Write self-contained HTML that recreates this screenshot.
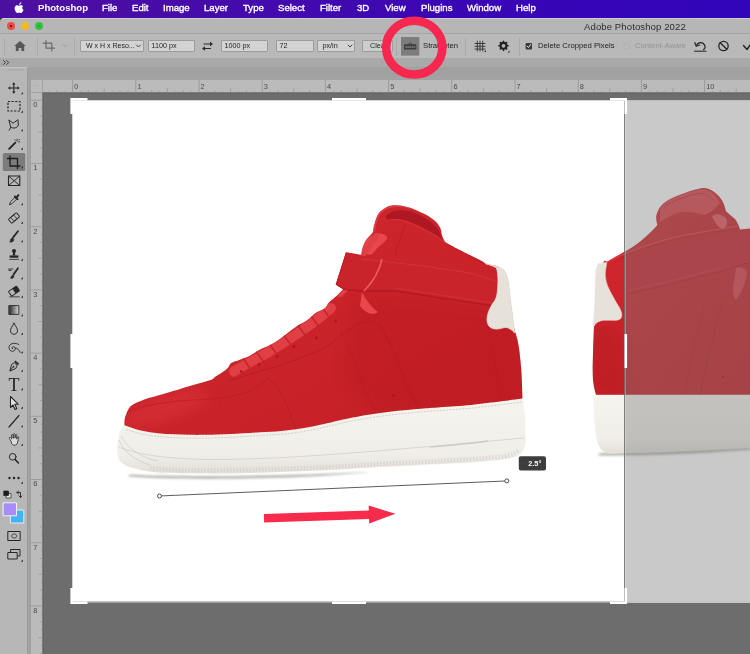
<!DOCTYPE html>
<html lang="en">
<head>
<meta charset="utf-8">
<title>Adobe Photoshop 2022</title>
<style>
html,body{margin:0;padding:0;}
body{width:750px;height:654px;position:relative;overflow:hidden;background:#737373;font-family:"Liberation Sans",sans-serif;}
.abs{position:absolute;}
#menubar span,#titlebar .t,.fld,.olbl,svg{will-change:transform;}
#menubar{left:0;top:0;width:750px;height:17.500px;background:linear-gradient(90deg,#4e10a0 0%,#430aad 35%,#3906b5 65%,#3205bb 100%);color:#fff;font-size:9.6px;-webkit-text-stroke:0.35px #fff;}
#menubar span{position:absolute;top:1.200px;white-space:nowrap;line-height:13px;}
#titlebar{left:0;top:17.500px;width:750px;height:16px;background:#b6b6b6;border-top:1.300px solid #cdcdcd;box-sizing:border-box;}
#titlebar .t{position:absolute;left:584px;top:2.500px;font-size:9.550px;line-height:12px;color:#2e2e2e;white-space:nowrap;letter-spacing:0.1px;}
.dot{position:absolute;top:3.400px;width:7.800px;height:7.800px;border-radius:50%;}
#optbar{left:0;top:33px;width:750px;height:25px;background:#b9b9b9;border-top:1px solid #a4a4a4;box-sizing:border-box;}
.fld{position:absolute;top:6.400px;height:11.500px;background:#d3d3d3;border:0.700px solid #9c9c9c;box-sizing:border-box;font-size:7.200px;color:#1e1e1e;line-height:10px;padding-left:2.500px;white-space:nowrap;border-radius:1px;}
.olbl{position:absolute;font-size:7.700px;color:#222;white-space:nowrap;top:7px;line-height:10px;}
.sep{position:absolute;top:4px;width:1px;height:18px;background:#a9a9a9;}
#strip{left:0;top:58px;width:750px;height:22px;background:#a1a1a1;}
#gap{left:27px;top:79px;width:4px;height:575px;background:#a1a1a1;}
#strip2{left:0;top:57.600px;width:750px;height:9px;background:#a9a9a9;}
#toolbar{left:0;top:66.800px;width:27.500px;height:588px;background:#b7b7b7;border-right:0.700px solid #9a9a9a;border-top:0.700px solid #c4c4c4;box-sizing:border-box;}
#hruler{left:42px;top:80px;width:708px;height:13px;background:#b6b6b6;border-bottom:1px solid #6a6a6a;}
#vruler{left:30px;top:80px;width:12px;height:574px;background:#b6b6b6;border-right:1px solid #6a6a6a;box-sizing:border-box;}
.rn{position:absolute;font-size:7.5px;color:#444;line-height:8px;}
#canvas{left:42px;top:94px;width:708px;height:560px;background:#737373;}
</style>
</head>
<body>
<!--CANVAS-START-->
<svg class="abs" style="left:0;top:0" width="750" height="654" viewBox="0 0 750 654">
<defs>
<clipPath id="docclip"><rect x="72.400" y="100.400" width="677.600" height="500.900"/></clipPath>
<linearGradient id="soleg" x1="0" y1="0" x2="0" y2="1"><stop offset="0" stop-color="#f6f4ef"/><stop offset="0.75" stop-color="#f0eee8"/><stop offset="1" stop-color="#e2dfd8"/></linearGradient>
<linearGradient id="redg" x1="0" y1="0" x2="1" y2="1"><stop offset="0" stop-color="#d3282f"/><stop offset="1" stop-color="#c31e26"/></linearGradient>
<filter id="blur3" x="-20%" y="-300%" width="140%" height="700%"><feGaussianBlur stdDeviation="2"/></filter>
<filter id="blur6" x="-30%" y="-30%" width="160%" height="160%"><feGaussianBlur stdDeviation="7"/></filter>
<filter id="blur1" x="-20%" y="-20%" width="140%" height="140%"><feGaussianBlur stdDeviation="1.2"/></filter>
</defs>
<rect x="42" y="93" width="708" height="561" fill="#6d6d6d"/>
<rect x="72.400" y="100.400" width="677.600" height="502.500" fill="#a8a8a8"/><rect x="72.400" y="100.400" width="677.600" height="500.900" fill="#ffffff"/>
<g clip-path="url(#docclip)">
<!-- LEFT SHOE -->
<g id="shoeL">
<path d="M128 476.500 C160 479.500 230 479.500 290 477.500 C320 476.300 345 474.500 370 472 C345 473 320 474 290 474.800 C230 476.300 170 476.500 130 474.500 Z" fill="#66665f" opacity="0.45" filter="url(#blur1)"/>
<path id="soleL" d="M122.8 426 C121.5 428.6 119.9 430.4 119 433.9 C118.1 437.3 117.5 443 117.3 446.7 C117.1 450.4 117.3 453.6 118 456.3 C118.7 459 119.5 460.8 121.7 462.7 C123.9 464.6 127 466.1 131.3 467.5 C135.6 468.9 142 470.3 147.3 471.2 C152.6 472.1 156.2 472.4 163.3 472.8 C170.4 473.2 180.1 473.2 190 473.3 C199.9 473.4 207.7 473.8 222.7 473.6 C237.7 473.4 262.1 472.6 280 472 C297.9 471.4 313.3 470.8 330 470 C346.7 469.2 365 467.8 380 467 C395 466.2 410 465.5 420 465 C430 464.5 431.6 464.4 440 464 C448.4 463.6 461.7 463.1 470.6 462.5 C479.5 461.9 486.9 461.3 493.5 460.6 C500.1 459.9 505.5 459.4 510 458.3 C514.5 457.2 518 456.3 520.5 454 C523 451.7 524.5 448.3 525.3 444.5 C526.1 440.7 525.4 436 525.3 431.2 C525.2 426.4 525.3 421.3 524.9 415.9 C524.5 410.5 523.5 404.4 522.8 398.6 C458.5 404.1 394.3 409.5 330 415 C260.9 418.7 191.9 422.3 122.8 426 Z" fill="url(#soleg)"/>
<path id="upperL" d="M124.4 425.2 C124.5 423.5 124.3 421.7 124.6 420 C124.9 418.3 125 417.1 126 414.8 C127 412.5 128.1 408.4 130.8 406 C133.5 403.6 137.5 402.1 142 400.4 C146.5 398.7 152.7 397.2 158 395.6 C163.3 394 168.7 392.4 174 390.8 C179.3 389.2 185.4 387.2 190 385.9 C194.6 384.5 197.6 383.8 201.3 382.7 C205 381.6 209.7 380.5 212 379.5 C214.3 378.5 213.4 378.1 215.2 376.8 C217 375.6 220.6 373.5 222.7 372 C224.8 370.5 226.6 369.2 228 367.7 C229.4 366.2 229.4 364.2 231.2 363 C233 361.8 235.7 361.5 238.7 360.3 C241.7 359.1 245.8 357.8 249.3 356 C252.9 354.2 256.6 351.4 260 349.6 C263.4 347.8 266.8 346.7 270 345 C273.2 343.3 276.1 341.5 279.2 339.4 C282.2 337.3 285.2 334.9 288.3 332.6 C291.4 330.3 294.4 327.7 297.5 325.7 C300.6 323.7 303.6 322.8 306.7 320.6 C309.8 318.5 312.8 314.9 315.9 312.8 C318.9 310.8 322.8 310.1 325 308.3 C327.2 306.5 327.3 304.1 329.3 302 C331.3 299.9 334.5 297.8 336.8 295.7 C339.1 293.6 341.1 291.4 343.2 289.3 C340.7 287.7 338.2 286 335.7 284.4 C339.1 273.7 342.5 263 345.9 252.3 C351.1 253.2 356.2 254.1 361.4 255 C361.8 252.7 361.7 250.5 362.5 248 C363.3 245.5 364.4 242.5 366 240 C367.6 237.5 371.1 235 372.3 233 C373.6 231 373.1 229.8 373.5 228 C373.9 226.2 374.3 224.2 375 222 C375.7 219.8 376.7 216.8 377.7 215 C378.7 213.2 379.2 212.4 381 211 C382.8 209.6 386 207.3 388.3 206.3 C390.6 205.3 392.8 205.3 395 205.2 C397.2 205.1 399.5 205.3 401.7 205.7 C403.9 206 405.8 206.6 408 207.3 C410.2 208 412.5 208.7 415 209.7 C417.5 210.7 420.6 212.1 423 213.3 C425.4 214.5 427.7 215.7 429.7 217 C431.7 218.3 433.4 219.6 435 221 C436.6 222.4 438 224.2 439 225.7 C440 227.2 440.5 228.4 441 230 C441.5 231.6 441.4 233.4 441.9 235 C442.4 236.6 443 238.4 443.9 239.8 C444.8 241.2 444.2 241.5 447.5 243.5 C450.8 245.5 458.1 249.1 463.6 251.9 C469.1 254.7 476.9 258.4 480.5 260.3 C484.1 262.2 483.8 262.5 485.5 263.6 C490.5 265 497.1 265.8 500.6 267.8 C504.1 269.8 505.1 272.2 506.5 275.4 C507.9 278.6 508.4 283 509 287.2 C509.6 291.4 509.8 296.1 510.4 300.6 C511 305.1 511.8 309.5 512.4 314 C513 318.5 513.1 323.2 514 327.5 C514.9 331.8 516.6 335.9 517.5 340 C518.4 344.1 518.9 347 519.5 352 C520.1 357 520.9 364.5 521.3 370 C521.7 375.5 521.8 380.2 522 385 C522.2 389.8 522.3 394.1 522.4 398.6 C515.3 399.5 509.8 400.2 501.2 401.3 C492.6 402.4 480.8 403.9 470.6 404.9 C460.4 405.9 448.4 406.6 440 407.2 C431.6 407.8 427.8 408 420 408.7 C412.2 409.4 402.2 410.2 393.3 411.3 C384.4 412.4 375.6 413.5 366.7 415 C357.8 416.5 347.1 418.7 340 420.2 C332.9 421.7 330.2 422.6 324 424 C317.8 425.4 309.8 427.2 302.7 428.3 C295.6 429.4 288.4 430.2 281.3 430.9 C274.2 431.5 268.6 431.7 260 432.2 C251.4 432.7 239 433.6 230 434 C221 434.4 212.7 434.7 206 434.8 C199.3 434.9 195.3 434.9 190 434.8 C184.7 434.7 179.3 434.6 174 434.3 C168.7 434 163.3 433.8 158 433.2 C152.7 432.6 147.6 432.1 142 430.8 C136.4 429.5 130.3 427.1 124.4 425.2 Z" fill="url(#redg)"/>
<!-- left shoe details -->
<clipPath id="clipUL"><use href="#upperL"/></clipPath>
<clipPath id="clipSL"><use href="#soleL"/></clipPath>
<g clip-path="url(#clipUL)">
<!-- soft shading -->
<path d="M350 300 L400 296 L490 310 L524 330 L524 402 L380 416 L345 380 Z" fill="#b0141d" opacity="0.26" filter="url(#blur6)"/>
<path d="M118 430 C122 410 150 398 190 388 L215 398 L170 420 Z" fill="#e8434a" opacity="0.32" filter="url(#blur6)"/>
<!-- collar inner lining -->
<path d="M386 216 C392 210 400 209.500 408.300 211 C414 212.500 420 215 424.300 217.700 C429 220.500 433 223 435 225.700 C438 229 440 232 441 236 L443.500 240.500 C438 235.500 432 232 427 229.700 C421 226.500 416 224 411 222.300 C407 220.500 403 219.300 399 219 C394 219 390 219.500 387 220.300 Z" fill="#ae1822"/>
<!-- rim highlight -->
<path d="M374 232 C375 224 377 217 381 212 C385 208 390 206.500 396 206 C404 205.500 412 207.500 420 210.500 C428 214 435 218.500 439 224" stroke="#e0424a" stroke-width="2" fill="none" opacity="0.75"/>
<!-- tongue seam -->
<path d="M406 225 C402 233 398 243 395 255" stroke="#b01822" stroke-width="0.900" fill="none" opacity="0.6"/>
<path d="M386 221 C392 218 402 219.500 412 224 C424 229 436 236 446 243" stroke="#dc3d45" stroke-width="1" fill="none" opacity="0.6"/>
<!-- lace loops at top -->
<path d="M363 252 C362 244 367 238 374 234.500 C380 232.500 386 234 387.500 238 C385 243 378 246 374 252 C372 255 368 256 363 252 Z" fill="#e8474e"/>
<!-- laces band -->
<path d="M234 371.500 C244 365 256 359 268 352.500 C280 345.500 292 337.500 302 330.500 C312 323.500 322 316.500 331 308" stroke="#e03f46" stroke-width="10" fill="none" stroke-linecap="round"/>
<path d="M340 294 C348 288 356 274 363 254 L376 236" stroke="#e03f46" stroke-width="6" fill="none" stroke-linecap="round"/>
<g stroke="#c5232c" stroke-width="1.700" fill="none" opacity="0.9" stroke-linecap="round">
<path d="M243 358 l6 9 M256.500 352 l6.500 9 M270 345 l7 9.500 M284 335.500 l7 9.500 M298 325.500 l7 9.500 M311 316 l7 9.500 M323 308.500 l6 8.500"/>
</g>
<g fill="#a81620"><circle cx="241.200" cy="371.500" r="1.300"/><circle cx="259" cy="364.500" r="1.300"/><circle cx="277.200" cy="356.500" r="1.400"/><circle cx="294" cy="346.500" r="1.400"/><circle cx="316.400" cy="338" r="1.400"/><circle cx="335.600" cy="321" r="1.400"/></g>
<!-- eyestay seam -->
<path d="M228 381 C245 376 262 370 282.800 364.800 C290 362 297 359 305 356 C312 353.500 320 350.500 326 347 C332 343 338 337 344 333 C350 329 354 325 360 323 C367 320 374 321 380 326 C390 340 400 368 410 392 C414 400 418 408 422 413" stroke="#b51b25" stroke-width="1.100" fill="none" opacity="0.75"/>
<path d="M340 331 C346 340 352 356 358 372 C362 384 368 398 376 412" stroke="#b51b25" stroke-width="0.900" fill="none" opacity="0.6"/>
<!-- mudguard / toe seam -->
<path d="M124 414 C140 405 165 402 192 400 C212 399 232 398 247 392 C256 388 262 384 268 378" stroke="#b51b25" stroke-width="1" fill="none" opacity="0.6"/>
<path d="M268 378 C282 390 290 410 296 431" stroke="#b51b25" stroke-width="1" fill="none" opacity="0.55"/>
<!-- strap -->
<path d="M345.900 252.300 L361.400 255.500 L384 258.800 L423 263.400 L470 270.300 L497 279 L497 306 L470 302.400 L395.700 291 L361 291 L343.200 289.300 L335.700 284.400 Z" fill="#c9232c"/>
<path d="M335.700 284.400 L343.200 289.300 L361 291 L395.700 291 L470 302.400 L495 306" stroke="#a9151f" stroke-width="1.400" fill="none" opacity="0.7"/>
<path d="M362 259 L384 261.500 L423 266 L470 273 L497 281.500" stroke="#e24a52" stroke-width="0.800" fill="none" opacity="0.8" stroke-dasharray="1.400 0.800"/>
<path d="M395 288 L470 299.500 L495 303.500" stroke="#e24a52" stroke-width="0.800" fill="none" opacity="0.7" stroke-dasharray="1.400 0.800"/>
<path d="M382 259 C380 268 374 281 364 291" stroke="#ef5a63" stroke-width="1.600" fill="none"/>
<path d="M346.200 253 L336.200 284.400" stroke="#b31a25" stroke-width="1" fill="none" opacity="0.7"/>
<!-- lace loop tail under strap -->
<path d="M362 292 C366 300 372 308 378 312 C374 316 366 314 360 306 Z" fill="#e8474e"/>
<!-- collar stitching -->
<path d="M446 243 C458 250 470 256.500 484 264" stroke="#b51b25" stroke-width="0.900" fill="none" opacity="0.6"/>
<!-- heel seam -->
<path d="M487 322 C492 345 497 372 500 403" stroke="#b51b25" stroke-width="0.900" fill="none" opacity="0.45"/>
<circle cx="393.500" cy="395.500" r="1" fill="#9a1019"/>
</g>
<g clip-path="url(#clipSL)">
<!-- sole top highlight and stitch -->
<path d="M126 429.5 C128.7 430.3 136.7 432.9 142 434.1 C147.3 435.3 152.7 435.9 158 436.5 C163.3 437.1 168.7 437.3 174 437.6 C179.3 437.9 184.7 438 190 438.1 C195.3 438.2 199.3 438.2 206 438.1 C212.7 438 221 437.7 230 437.3 C239 436.9 251.4 436 260 435.5 C268.6 435 274.2 434.8 281.3 434.2 C288.4 433.6 295.6 432.8 302.7 431.6 C309.8 430.5 317.8 428.7 324 427.3 C330.2 425.9 332.9 425 340 423.5 C347.1 422 357.8 419.8 366.7 418.3 C375.6 416.8 384.4 415.7 393.3 414.6 C402.2 413.6 412.2 412.7 420 412 C427.8 411.3 431.6 411.1 440 410.5 C448.4 409.9 460.4 409.2 470.6 408.2 C480.8 407.2 492.5 405.7 501.2 404.6 C509.9 403.5 519.4 402.3 523 401.8" stroke="#cbc7be" stroke-width="0.800" fill="none" stroke-dasharray="2 1.200"/>
<path d="M119 447 C140 456 176 459 207 459.500 C260 460 330 455 400 449 C450 445 500 440 524 438" stroke="#d9d6ce" stroke-width="1" fill="none"/>
<!-- teeth -->
<path d="M150 468.3 C156.7 468.6 168.3 470.2 190 470.3 C211.7 470.4 256.7 469.6 280 469 C303.3 468.4 313.3 467.8 330 467 C346.7 466.2 361.7 465 380 464 C398.3 463 421.2 462.1 440 461 C458.8 459.9 481.3 458.6 493 457.6 C504.7 456.6 505.7 456.2 510 455 C514.3 453.8 517.5 451.2 519 450.5" stroke="#cfcbc3" stroke-width="4.500" fill="none" stroke-dasharray="1.600 1.600" opacity="0.55"/>
<!-- toe wrap lines -->
<path d="M119 440 C124 452 134 460 150 465 M121 436 C128 449 140 457 158 461" stroke="#d2cec6" stroke-width="0.800" fill="none"/>
<path d="M430 447 C450 445.500 470 443.500 488 441" stroke="#cbc7be" stroke-width="1.600" fill="none" opacity="0.8"/>
</g>
<path id="tabL" d="M485.500 263.600 L500.600 267.800 C504 270 506 273 506.500 275.400 C508 279 509 283 509 287.200 C510 292 510.400 296 510.400 300.600 C511 305 512 310 512.400 314 C513 319 513.500 323 514 327.500 L514.500 333 C513 331 511.500 329.500 510 329 C508 327.500 506 327.300 504 327.600 C501 328.500 498 329.300 495.600 329 C492.500 328.600 490 327.500 488.900 325.900 C487.500 324 487 321.500 487 319 C487.300 315 488.300 312 489.700 309 C491 306 493 303 494.800 300.600 C496.300 298 497 295 497.300 292 C497.800 288 498 284 498 280.500 C498 276 497.500 271 496.400 267.800 C493 266 489 264.500 485.500 263.600 Z" fill="#e6e2da" stroke="#e6e2da" stroke-width="0.800"/>
</g>
<!-- RIGHT SHOE -->
<g id="shoeR">
<path d="M598 455.500 C640 456.500 700 453.500 750 450 L750 447.500 L600 453 Z" fill="#66665f" opacity="0.45" filter="url(#blur1)"/>
<path d="M593 394 L750 394.200 L750 447.400 C720 449.200 690 451 660 452.200 C648 452.800 636 453 625.400 452.900 C620 453.300 615 453.800 610.300 453.600 C606 452.800 602.500 451 600.600 448.800 C598.500 445.500 597.200 441.500 596.500 437.800 C595.500 432 594.800 426.500 594.400 421.300 C593.700 412 593.200 403 593 394 Z" fill="url(#soleg)"/>
<path d="M596 394.800 C594.500 390 593.500 385 593 380 C592.600 374 592.600 367 592.800 361 C593 350 593.400 339 593.900 328 C594.500 323 594.800 318 595 313.500 C595.300 305 595.800 296 596.500 287.800 C597.500 281 599 274 601 269.400 C602 266 603 263 604.600 260.600 L607 261.700 C612 258.500 618 255.500 623 252.600 C627 250.500 631 248 634.400 245.700 C638.500 243 642 240 645.900 236.500 C650 233 654 229 657.300 225 C656.500 222 656 219 656.200 215.900 C657 213 658 210.500 659.600 207.800 C662 204.500 665 202 668.800 199.800 C674 197 679 195 684.900 193 C690 191 695.500 189.500 700.900 188.300 C704 187.800 707 188.300 710 189.500 C715 192 719 195.500 721.600 199.800 C724 203.500 725 207 726 211.300 C729 214 732 216.500 735.300 219.300 C737.500 222.500 739 226 740 229.600 L750 228.500 L750 394.800 Z" fill="url(#redg)" id="upperR"/>
<clipPath id="clipUR"><use href="#upperR"/></clipPath>
<g clip-path="url(#clipUR)">
<path d="M585 330 L620 322 L630 400 L585 400 Z" fill="#a5121b" opacity="0.30" filter="url(#blur6)"/>

<!-- tongue face -->
<path d="M660 209 C664 203 670 199 678 196 C686 193 694 190.500 701 189.300 C705 189 708 190 711 192 C715 195 718 199 720 203 C716 208 710 213 704 215 C696 213 688 211 680 212 C673 214 666 218 660 222 Z" fill="#e0444b"/>
<path d="M664 207 C672 201 684 196.500 698 193.500 C704 193 709 195 713 200" stroke="#b01822" stroke-width="0.900" fill="none" opacity="0.6"/>
<!-- lace loop -->
<path d="M712 216 C716 213 722 214 726 218 C728 222 727 227 723 229 C719 228 715 224 712 216 Z" fill="#e8545b"/>
<!-- collar lines -->
<path d="M607 262 C625 253 650 243 676 237 C700 232 726 228 750 224" stroke="#e0525a" stroke-width="0.900" fill="none" opacity="0.8"/>
<path d="M620 258 C640 249 662 243 684 238 C704 234 728 230 750 227" stroke="#b01822" stroke-width="0.800" fill="none" opacity="0.5"/>
<!-- strap -->
<path d="M624 259 C650 247 690 238.500 720 235 L750 231 L750 262 L719 272 C700 276 690 279 680 282 C660 287 645 290 627.500 294 Z" fill="#cc252e" opacity="0.9"/>
<path d="M627.500 294 C645 290 660 287 680 282 C690 279 700 276 719 272 L750 262" stroke="#a8141e" stroke-width="1.200" fill="none" opacity="0.6"/>
<path d="M628 290.500 C646 286.500 661 283.500 680 278.500 C692 275.500 704 272 719 268.500" stroke="#e4555c" stroke-width="0.700" fill="none" opacity="0.7" stroke-dasharray="1.400 0.800"/>
<!-- lace tail -->
<path d="M736 268 C740 266 745 268 747 272 C746 282 742 292 736 300 C733 297 732 290 734 282 Z" fill="#dc4149"/>
<!-- side seam -->
<path d="M722 300 C716 330 706 360 700 398" stroke="#a8141e" stroke-width="0.900" fill="none" opacity="0.45"/>
<path d="M706 300 C698 330 690 362 684 398" stroke="#a8141e" stroke-width="0.800" fill="none" opacity="0.35"/>
<circle cx="723" cy="377" r="0.900" fill="#8a0c15"/>
</g>

<path d="M598.300 263.700 L606.800 262.500 C606 267 605.200 271 605.200 275 C605.500 279 606.300 282.500 607.500 285.900 C609 289.500 611 293 612.900 296.600 C614.500 299.800 616.500 302.800 618.200 305.700 C619.800 308 621 310.500 621.600 313.400 C622 315.500 621.600 317.500 620.500 318.700 C619 320 616.500 320.300 614.400 320.300 C610.500 320.200 606.500 320 603 320.300 C600 320.800 597.800 322 596 323.300 C595 324.300 594.400 325.300 594 326.400 L593.200 326.400 C593.500 323 593.800 319 594 316.500 C594.400 311 594.800 306 595 301 C595 296 595.100 291 595.300 285.900 C595.400 280.500 595.600 275.500 596 270.600 C596.500 268 597.300 265.600 598.300 263.700 Z" fill="#e6e2da" stroke="#e6e2da" stroke-width="0.600"/>
</g>
</g>
<!-- crop shield -->
<rect x="625.100" y="100.400" width="124.900" height="500.900" fill="#7a7a7a" opacity="0.405"/><rect x="625.100" y="601.300" width="124.900" height="1.600" fill="#c8c8c8"/>
<rect x="624.100" y="100.400" width="1" height="502.500" fill="#707070"/><rect x="625.100" y="100.400" width="0.800" height="502.500" fill="#ffffff" opacity="0.35"/>
</svg>
<!--CANVAS-END-->
<div id="menubar" class="abs">
<svg class="abs" style="left:13.700px;top:2px" width="10.600" height="11.400" viewBox="0 0 12 13"><path d="M8.300 0.200 C8.400 1 8.100 1.700 7.600 2.300 C7.100 2.900 6.400 3.300 5.700 3.200 C5.600 2.500 5.900 1.800 6.400 1.300 C6.900 0.700 7.700 0.300 8.300 0.200 Z M10.500 4.600 C9.800 5 9.300 5.700 9.300 6.600 C9.300 7.700 10 8.500 10.800 8.800 C10.500 9.700 10.100 10.500 9.500 11.300 C9 12 8.500 12.600 7.700 12.600 C6.900 12.600 6.700 12.200 5.800 12.200 C4.900 12.200 4.600 12.600 3.900 12.600 C3.100 12.600 2.500 11.900 2 11.200 C0.900 9.700 0.100 7 1.200 5.200 C1.700 4.300 2.700 3.700 3.700 3.700 C4.500 3.700 5.200 4.200 5.700 4.200 C6.200 4.200 7.100 3.600 8.100 3.700 C8.500 3.700 9.700 3.900 10.500 4.600 Z" fill="#fff"/></svg>
<span style="left:38px;font-weight:bold;-webkit-text-stroke:0">Photoshop</span>
<span style="left:102px">File</span>
<span style="left:132px">Edit</span>
<span style="left:163px">Image</span>
<span style="left:204px">Layer</span>
<span style="left:243px">Type</span>
<span style="left:278px">Select</span>
<span style="left:320px">Filter</span>
<span style="left:357px">3D</span>
<span style="left:385px">View</span>
<span style="left:421px">Plugins</span>
<span style="left:467px">Window</span>
<span style="left:516px">Help</span>
</div>
<div class="abs" style="left:0;top:17.500px;width:3px;height:3px;background:#2a2a2a"></div>
<div id="titlebar" class="abs" style="border-top-left-radius:4px">
<div class="dot" style="left:6.800px;background:radial-gradient(circle,#8a1410 0 22%,#ee4b46 28%)"></div>
<div class="dot" style="left:21px;background:#f5b82c"></div>
<div class="dot" style="left:35.400px;background:radial-gradient(circle,#2ba83a 0 18%,#35c148 34%)"></div>
<div class="t">Adobe Photoshop 2022</div>
</div>
<div id="optbar" class="abs">
<div class="sep" style="left:4px;background:#a8a8a8"></div>
<div class="sep" style="left:37px"></div>
<div class="sep" style="left:74px"></div>
<div class="sep" style="left:396px"></div>
<div class="sep" style="left:465px"></div>
<div class="sep" style="left:519px"></div>
<svg class="abs" style="left:0;top:-1px" width="750" height="25" viewBox="0 33 750 25" fill="none" stroke-linecap="round" stroke-linejoin="round">
<!-- home -->
<path d="M20 41 L14.200 46 H15.800 V51 H18.600 V48 H21.400 V51 H24.200 V46 H25.800 Z" fill="#575757"/>
<!-- crop icon -->
<path d="M46 40.500 V48.200 H54.500 M43.300 43.200 H51.800 V51" stroke="#6a6a6a" stroke-width="1.200"/>
<path d="M63 44.600 L65 46.600 L67 44.600" stroke="#9a9a9a" stroke-width="0.900"/>
<!-- swap -->
<path d="M204 44 H211 M203.500 48.500 H210.500" stroke="#2a2a2a" stroke-width="1.100"/><path d="M213 44 l-3 -2.200 v4.400 z M202 48.500 l3 -2.200 v4.400 z" fill="#2a2a2a"/>
<!-- straighten -->
<rect x="401" y="37" width="18.300" height="18.600" fill="#7d7d7d"/>
<rect x="404" y="44.300" width="12.300" height="5.200" rx="0.600" fill="#3c3c3c"/><path d="M405.500 47 H415" stroke="#b8b8b8" stroke-width="0.800" stroke-dasharray="1.200 1"/><path d="M408.500 44 C409 42.600 411.500 42.600 412 44" stroke="#3c3c3c" stroke-width="0.800"/>
<!-- grid -->
<path d="M475 43.500 H485 M475 46.300 H485 M475 49.100 H485 M477.300 41.200 V51 M480 41.200 V51 M482.700 41.200 V51" stroke="#333" stroke-width="0.900"/><path d="M486 50 v2 h-2 z" fill="#333"/>
<!-- gear -->
<circle cx="503.500" cy="45.800" r="2.900" stroke="#222" stroke-width="2.100"/><path d="M503.500 41.200 V42.300 M503.500 49.300 V50.400 M498.900 45.800 H500 M507 45.800 H508.100 M500.300 42.600 L501 43.300 M506 48.300 L506.700 49 M506.700 42.600 L506 43.300 M501 48.300 L500.300 49" stroke="#222" stroke-width="1.500"/><path d="M509.500 50.500 v2 h-2 z" fill="#222"/>
<!-- checkbox -->
<rect x="525.600" y="43" width="6.400" height="6.400" rx="1" fill="#3a3a3a"/><path d="M527.200 46.200 L528.500 47.600 L530.600 44.600" stroke="#e6e6e6" stroke-width="1"/>
<rect x="624" y="43.300" width="5.600" height="5.600" rx="1" stroke="#b0b0b0" stroke-width="0.700"/>
<!-- undo -->
<path d="M696.500 45.200 C698 42 702.500 41.600 704.300 44.600 C705.500 46.600 705 48.600 703.600 49.600" stroke="#222" stroke-width="1.200"/><path d="M694.800 42.500 L696.200 46.300 L699.800 45" stroke="#222" stroke-width="1.100"/><path d="M694.500 51.200 H706" stroke="#222" stroke-width="1"/>
<!-- cancel -->
<circle cx="723.500" cy="46" r="4.700" stroke="#222" stroke-width="1.300"/><path d="M720.200 42.700 L726.800 49.300" stroke="#222" stroke-width="1.300"/>
<!-- commit -->
<path d="M743.500 45.500 L747 49.500 L752 42.500" stroke="#222" stroke-width="1.400"/>
</svg>
<div class="fld" style="left:79.500px;width:64px;padding-left:5px;font-size:7px">W x H x Reso...</div>
<div class="fld" style="left:147.500px;width:46.500px;">1100 px</div>
<div class="fld" style="left:221px;width:47px;">1000 px</div>
<div class="fld" style="left:275.500px;width:38px;">72</div>
<div class="fld" style="left:317px;width:37.500px;padding-left:4.500px">px/in</div>
<div class="fld" style="left:362px;width:31px;padding-left:7px;background:#cdcdcd">Clear</div>
<svg class="abs" style="left:0;top:-1px" width="750" height="25" viewBox="0 33 750 25" fill="none" stroke-linecap="round" stroke-linejoin="round"><path d="M136.500 45 L138.500 47 L140.500 45 M348 45 L350 47 L352 45" stroke="#333" stroke-width="0.900"/></svg>
<div class="olbl" style="left:422.500px">Straighten</div>
<div class="olbl" style="left:537.600px">Delete Cropped Pixels</div>
<div class="olbl" style="left:635px;color:#949494">Content-Aware</div>
</div>
<div id="strip" class="abs"></div>
<div id="gap" class="abs"></div>
<div id="strip2" class="abs"></div>
<div id="toolbar" class="abs"></div>
<!--TB-START-->
<svg class="abs" style="left:0;top:58px" width="30" height="596" viewBox="0 58 30 596" fill="none" stroke="#262626" stroke-width="1.1" stroke-linecap="round" stroke-linejoin="round">
<!-- collapse chevrons -->
<path d="M3.500 60.500 L5.500 62.500 L3.500 64.500 M6.700 60.500 L8.700 62.500 L6.700 64.500" stroke="#333" stroke-width="0.9"/>
<!-- grip -->
<path d="M8 70 H24" stroke="#a5a5a5" stroke-width="1.2"/>
<!-- crop highlight -->
<rect x="2.800" y="153" width="22.500" height="18" rx="1.500" fill="#7c7c7c" stroke="none"/>
<!-- corner triangles -->
<g fill="#333" stroke="none">
<path d="M23 92 v2.200 h-2.200 z"/><path d="M23 110.500 v2.200 h-2.200 z"/><path d="M23 129 v2.200 h-2.200 z"/><path d="M23 147.500 v2.200 h-2.200 z"/><path d="M23 166 v2.200 h-2.200 z"/>
<path d="M23 203 v2.200 h-2.200 z"/><path d="M23 221.500 v2.200 h-2.200 z"/><path d="M23 240 v2.200 h-2.200 z"/><path d="M23 258.500 v2.200 h-2.200 z"/><path d="M23 277 v2.200 h-2.200 z"/><path d="M23 295.500 v2.200 h-2.200 z"/><path d="M23 314 v2.200 h-2.200 z"/><path d="M23 332.500 v2.200 h-2.200 z"/><path d="M23 351 v2.200 h-2.200 z"/><path d="M23 369.500 v2.200 h-2.200 z"/><path d="M23 388 v2.200 h-2.200 z"/><path d="M23 406.500 v2.200 h-2.200 z"/><path d="M23 425 v2.200 h-2.200 z"/><path d="M23 443.500 v2.200 h-2.200 z"/><path d="M23 481.500 v2.200 h-2.200 z"/><path d="M23 559.500 v2.200 h-2.200 z"/>
</g>
<!-- move -->
<g transform="translate(13.800 88)"><path d="M0 -4.500 V4.500 M-4.500 0 H4.500" stroke-width="1.100"/><path d="M0 -5.800 l-1.700 2.200 h3.400 z M0 5.800 l-1.700 -2.200 h3.400 z M-5.800 0 l2.200 -1.700 v3.400 z M5.800 0 l-2.200 -1.700 v3.400 z" fill="#262626" stroke="none"/></g>
<!-- marquee -->
<rect x="8" y="101.500" width="12" height="9.500" stroke-dasharray="2.200 1.400" stroke-linecap="butt" stroke-width="1.200"/>
<!-- lasso -->
<g transform="translate(14 125) scale(0.880) translate(-14 -125)"><path d="M8.500 119.500 L13 123 L18.500 119 L19 125 C18 128.500 13 129.500 10.500 127.500 Z M10.500 127.500 L8.500 131" stroke-width="1.100"/></g>
<!-- magic wand -->
<g transform="translate(14 144) scale(0.880) translate(-14 -144)"><path d="M8.500 149.500 L15.500 142.500" stroke-width="2.200"/><path d="M17.500 138.500 v2 M19 141.500 h1.500 M16 140 l-1 -1 M19.500 139.500 l0.800 -0.800" stroke-width="0.900"/></g>
<!-- crop -->
<path d="M10 156 V166 H20 M7.500 158.500 H17.500 V168.500" stroke="#1b1b1b" stroke-width="1.300"/>
<!-- frame -->
<rect x="8.500" y="176" width="11.300" height="9.500" stroke-width="1.100"/><path d="M8.500 176 L19.800 185.500 M19.800 176 L8.500 185.500" stroke-width="0.900"/>
<!-- eyedropper -->
<g transform="translate(14 200) scale(0.880) translate(-14 -200)"><path d="M9 205 L10 202 L15 197 L17 199 L12 204 Z" stroke-width="1"/><path d="M15 196 L18 199 M16.500 197.500 L19 194.500" stroke-width="2.200"/></g>
<!-- healing -->
<g transform="translate(14 218) scale(0.880) translate(-14 -218)"><g transform="translate(14 218) rotate(-40)"><rect x="-6" y="-3" width="12" height="6" rx="1" stroke-width="1.100"/><rect x="-2" y="-3" width="4" height="6" stroke-width="0.800"/></g></g>
<!-- brush -->
<g transform="translate(14 236.5) scale(0.880) translate(-14 -236.5)"><path d="M18.500 230.500 L13 237.500" stroke-width="2"/><path d="M12.500 238 C11.500 238 10 239 10 241 C10 242 9.500 242.500 9 242.500 C11 243.500 13.500 242.500 13.800 240.500 Z" fill="#262626" stroke-width="0.600"/></g>
<!-- stamp -->
<g transform="translate(14 255) scale(0.880) translate(-14 -255)"><circle cx="14" cy="250.500" r="2.300" fill="#262626" stroke="none"/><path d="M13 252 h2 l0.500 3.500 h-3 z" fill="#262626" stroke="none"/><rect x="9" y="255.500" width="10" height="2.600" fill="#262626" stroke="none"/><path d="M9 260 H19" stroke-width="0.900"/></g>
<!-- history brush -->
<g transform="translate(14 273.5) scale(0.880) translate(-14 -273.5)"><path d="M18.500 267.500 L13.500 274.500" stroke-width="2"/><path d="M13 275 C11.500 275.500 11 277 10 279 C12 279.500 13.800 278.500 14 277 Z" fill="#262626" stroke-width="0.600"/><path d="M8.500 270 C9.500 268 11.500 267.500 13 268.500 M8.300 267.800 L8.500 270.200 L10.800 270" stroke-width="0.900"/></g>
<!-- eraser -->
<g transform="translate(14 292) scale(0.880) translate(-14 -292)"><g transform="translate(14 291) rotate(-35)"><rect x="-5.500" y="-3.200" width="11" height="6.400" rx="0.800" stroke-width="1.100"/><rect x="0" y="-3.200" width="5.500" height="6.400" fill="#262626" stroke="none"/></g><path d="M9 297.500 H20" stroke-width="0.900"/></g>
<!-- gradient -->
<linearGradient id="tg" x1="0" y1="0" x2="1" y2="0"><stop offset="0" stop-color="#2a2a2a"/><stop offset="1" stop-color="#d8d8d8"/></linearGradient>
<g transform="translate(14 310) scale(0.880) translate(-14 -310)"><rect x="8.500" y="305" width="11" height="10" fill="url(#tg)" stroke-width="1"/></g>
<!-- blur drop -->
<g transform="translate(14 329) scale(0.880) translate(-14 -329)"><path d="M14 322.500 C12 326 10 328.500 10 331 C10 333.300 11.800 335 14 335 C16.200 335 18 333.300 18 331 C18 328.500 16 326 14 322.500 Z" stroke-width="1.100"/></g>
<!-- dodge -->
<g transform="translate(14 348) scale(0.880) translate(-14 -348)"><path d="M19.500 344 C16 342 10 342 8.500 346 C7.500 349.500 10.500 352.500 13.500 351.500 C16 350.500 16 347 13.500 346.500 C11.500 346.300 11 348.500 12.500 349 M15.500 348 C18 348 19.500 350 21 353" stroke-width="1"/></g>
<!-- pen -->
<g transform="translate(14 366) scale(0.880) translate(-14 -366)"><g transform="translate(14 366) rotate(40)"><path d="M0 7 L-3.200 0.500 L-2.300 -3 H2.300 L3.200 0.500 Z M0 7 V1.500" stroke-width="1"/><circle cx="0" cy="0.800" r="0.900" fill="#262626" stroke="none"/><rect x="-2.800" y="-5.800" width="5.600" height="2" fill="#262626" stroke="none"/></g></g>
<!-- type -->
<text x="14" y="391" font-family="'Liberation Serif',serif" font-size="18" fill="#222" stroke="none" text-anchor="middle">T</text>
<!-- path select -->
<path d="M10.500 396.500 L10.500 407.500 L13 405 L15 409.500 L16.800 408.700 L14.800 404.300 L18.300 404.300 Z" stroke-width="1.100" fill="#e4e4e4"/>
<!-- line -->
<path d="M9 427 L19 415.500" stroke-width="1.200"/>
<!-- hand -->
<g transform="translate(14 440) scale(0.880) translate(-14 -440)"><path d="M10.500 441 C9 439 8 437.500 9 437 C10 436.500 11 438 11.500 439 L11.300 434.500 C11.300 433.500 12.700 433.500 12.800 434.500 L13.200 438 L13.400 433.500 C13.500 432.500 14.900 432.500 15 433.500 L15.100 438 L15.800 434.300 C16 433.400 17.300 433.600 17.200 434.600 L16.900 439 L17.900 436.600 C18.300 435.800 19.500 436.300 19.200 437.300 C18.500 440 18.300 442.500 17.500 444.500 C16.500 446.500 12.500 446.500 11.500 444.500 Z" stroke-width="0.900" fill="#dcdcdc"/></g>
<!-- zoom -->
<g transform="translate(14 459) scale(0.880) translate(-14 -459)"><circle cx="12.500" cy="456.500" r="3.800" stroke-width="1.100"/><path d="M15.300 459.500 L19 463.500" stroke-width="1.800"/></g>
<!-- dots -->
<g fill="#222" stroke="none"><circle cx="9.500" cy="478" r="1.200"/><circle cx="14" cy="478" r="1.200"/><circle cx="18.500" cy="478" r="1.200"/></g>
<!-- default colors / swap -->
<rect x="6.500" y="493.500" width="4.500" height="4.500" fill="#e8e8e8" stroke="#222" stroke-width="0.700"/><rect x="4" y="491" width="4.500" height="4.500" fill="#1c1c1c" stroke="#1c1c1c" stroke-width="0.700"/>
<path d="M17 492.500 H20.500 V497.500 M17 492.500 l1.500 -1.400 M17 492.500 l1.500 1.400 M20.500 497.500 l-1.400 -1.500 M20.500 497.500 l1.400 -1.500" stroke-width="0.900"/>
<!-- swatches -->
<rect x="10.800" y="510" width="13" height="13" fill="#3fb4fb" stroke="#e9e9e9" stroke-width="1"/>
<rect x="3.500" y="502.800" width="13" height="13" fill="#a98cfb" stroke="#f0f0f0" stroke-width="1"/>
<!-- quick mask -->
<rect x="8.200" y="531.500" width="12" height="9" stroke-width="1"/><ellipse cx="14.200" cy="536" rx="2.600" ry="2" stroke-width="0.800" stroke-dasharray="1 0.700"/>
<!-- screen mode -->
<rect x="11" y="549.500" width="9" height="6.500" stroke-width="1"/><rect x="8.200" y="552.500" width="9" height="6.500" stroke-width="1" fill="#b8b8b8"/>
</svg>
<!--TB-END-->
<!--RUL-START-->
<svg class="abs" style="left:30px;top:78px" width="720" height="576" viewBox="30 78 720 576" font-family="'Liberation Sans',sans-serif" font-size="7.4" fill="#4a4a4a">
<rect x="30" y="78.800" width="720" height="13.700" fill="#bbbbbb"/>
<rect x="30" y="79" width="12.500" height="575" fill="#bbbbbb"/>
<rect x="42.500" y="92.500" width="707.500" height="1" fill="#626262"/>
<rect x="42.500" y="92.500" width="1" height="561.500" fill="#626262"/>
<rect x="30" y="79" width="720" height="0.800" fill="#9c9c9c"/>
<rect x="30" y="79" width="0.800" height="575" fill="#9c9c9c"/>
<path d="M30 92.500 H42.500 M42.500 79 V92.500" stroke="#9a9a9a" stroke-width="0.700" fill="none"/>
<path d="M33 85.500 H40 M36.500 82 V89" stroke="#a6a6a6" stroke-width="0.600" stroke-dasharray="1 1" fill="none"/>
<path d="M48.9 91.0 V92.500 M56.8 90.0 V92.500 M64.7 91.0 V92.500 M72.6 79.500 V92.500 M80.5 91.0 V92.500 M88.4 90.0 V92.500 M96.3 91.0 V92.500 M104.2 88.5 V92.500 M112.1 91.0 V92.500 M120.0 90.0 V92.500 M127.9 91.0 V92.500 M135.8 79.500 V92.500 M143.7 91.0 V92.500 M151.6 90.0 V92.500 M159.5 91.0 V92.500 M167.4 88.5 V92.500 M175.3 91.0 V92.500 M183.2 90.0 V92.500 M191.1 91.0 V92.500 M199.0 79.500 V92.500 M206.9 91.0 V92.500 M214.8 90.0 V92.500 M222.7 91.0 V92.500 M230.6 88.5 V92.500 M238.5 91.0 V92.500 M246.4 90.0 V92.500 M254.3 91.0 V92.500 M262.2 79.500 V92.500 M270.1 91.0 V92.500 M278.0 90.0 V92.500 M285.9 91.0 V92.500 M293.8 88.5 V92.500 M301.7 91.0 V92.500 M309.6 90.0 V92.500 M317.5 91.0 V92.500 M325.4 79.500 V92.500 M333.3 91.0 V92.500 M341.2 90.0 V92.500 M349.1 91.0 V92.500 M357.0 88.5 V92.500 M364.9 91.0 V92.500 M372.8 90.0 V92.500 M380.7 91.0 V92.500 M388.6 79.500 V92.500 M396.5 91.0 V92.500 M404.4 90.0 V92.500 M412.3 91.0 V92.500 M420.2 88.5 V92.500 M428.1 91.0 V92.500 M436.0 90.0 V92.500 M443.9 91.0 V92.500 M451.8 79.500 V92.500 M459.7 91.0 V92.500 M467.6 90.0 V92.500 M475.5 91.0 V92.500 M483.4 88.5 V92.500 M491.3 91.0 V92.500 M499.2 90.0 V92.500 M507.1 91.0 V92.500 M515.0 79.500 V92.500 M522.9 91.0 V92.500 M530.8 90.0 V92.500 M538.7 91.0 V92.500 M546.6 88.5 V92.500 M554.5 91.0 V92.500 M562.4 90.0 V92.500 M570.3 91.0 V92.500 M578.2 79.500 V92.500 M586.1 91.0 V92.500 M594.0 90.0 V92.500 M601.9 91.0 V92.500 M609.8 88.5 V92.500 M617.7 91.0 V92.500 M625.6 90.0 V92.500 M633.5 91.0 V92.500 M641.4 79.500 V92.500 M649.3 91.0 V92.500 M657.2 90.0 V92.500 M665.1 91.0 V92.500 M673.0 88.5 V92.500 M680.9 91.0 V92.500 M688.8 90.0 V92.500 M696.7 91.0 V92.500 M704.6 79.500 V92.500 M712.5 91.0 V92.500 M720.4 90.0 V92.500 M728.3 91.0 V92.500 M736.2 88.5 V92.500 M744.1 91.0 V92.500" stroke="#8f8f8f" stroke-width="0.700" fill="none"/>
<text x="74.2" y="89.300">0</text>
<text x="137.4" y="89.300">1</text>
<text x="200.6" y="89.300">2</text>
<text x="263.8" y="89.300">3</text>
<text x="327.0" y="89.300">4</text>
<text x="390.2" y="89.300">5</text>
<text x="453.4" y="89.300">6</text>
<text x="516.6" y="89.300">7</text>
<text x="579.8" y="89.300">8</text>
<text x="643.0" y="89.300">9</text>
<text x="706.2" y="89.300">10</text>
<path d="M30.500 100.3 H42.500 M41.0 108.2 H42.500 M40.0 116.1 H42.500 M41.0 124.0 H42.500 M38.5 131.9 H42.500 M41.0 139.8 H42.500 M40.0 147.7 H42.500 M41.0 155.6 H42.500 M30.500 163.5 H42.500 M41.0 171.4 H42.500 M40.0 179.3 H42.500 M41.0 187.2 H42.500 M38.5 195.1 H42.500 M41.0 203.0 H42.500 M40.0 210.9 H42.500 M41.0 218.8 H42.500 M30.500 226.7 H42.500 M41.0 234.6 H42.500 M40.0 242.5 H42.500 M41.0 250.4 H42.500 M38.5 258.3 H42.500 M41.0 266.2 H42.500 M40.0 274.1 H42.500 M41.0 282.0 H42.500 M30.500 289.9 H42.500 M41.0 297.8 H42.500 M40.0 305.7 H42.500 M41.0 313.6 H42.500 M38.5 321.5 H42.500 M41.0 329.4 H42.500 M40.0 337.3 H42.500 M41.0 345.2 H42.500 M30.500 353.1 H42.500 M41.0 361.0 H42.500 M40.0 368.9 H42.500 M41.0 376.8 H42.500 M38.5 384.7 H42.500 M41.0 392.6 H42.500 M40.0 400.5 H42.500 M41.0 408.4 H42.500 M30.500 416.3 H42.500 M41.0 424.2 H42.500 M40.0 432.1 H42.500 M41.0 440.0 H42.500 M38.5 447.9 H42.500 M41.0 455.8 H42.500 M40.0 463.7 H42.500 M41.0 471.6 H42.500 M30.500 479.5 H42.500 M41.0 487.4 H42.500 M40.0 495.3 H42.500 M41.0 503.2 H42.500 M38.5 511.1 H42.500 M41.0 519.0 H42.500 M40.0 526.9 H42.500 M41.0 534.8 H42.500 M30.500 542.7 H42.500 M41.0 550.6 H42.500 M40.0 558.5 H42.500 M41.0 566.4 H42.500 M38.5 574.3 H42.500 M41.0 582.2 H42.500 M40.0 590.1 H42.500 M41.0 598.0 H42.500 M30.500 605.9 H42.500 M41.0 613.8 H42.500 M40.0 621.7 H42.500 M41.0 629.6 H42.500 M38.5 637.5 H42.500 M41.0 645.4 H42.500 M40.0 653.3 H42.500" stroke="#8f8f8f" stroke-width="0.700" fill="none"/>
<text x="33.300" y="107.1">0</text>
<text x="33.300" y="170.3">1</text>
<text x="33.300" y="233.5">2</text>
<text x="33.300" y="296.7">3</text>
<text x="33.300" y="359.9">4</text>
<text x="33.300" y="423.1">5</text>
<text x="33.300" y="486.3">6</text>
<text x="33.300" y="549.5">7</text>
<text x="33.300" y="612.7">8</text>
</svg>
<!--RUL-END-->
<!--OVL-START-->
<svg class="abs" style="left:0;top:0;pointer-events:none" width="750" height="654" viewBox="0 0 750 654" fill="none">
<!-- crop border + handles -->
<g stroke="#ffffff" stroke-width="2.600" stroke-linecap="butt" stroke-linejoin="miter">
<path d="M71.700 114 V99.300 H87.500"/>
<path d="M610 99.300 H625.800 V114"/>
<path d="M71.700 588 V602.800 H87.500"/>
<path d="M610 602.800 H625.800 V588"/>
<path d="M332 99.300 H366"/>
<path d="M332 602.800 H366"/>
<path d="M71.700 334 V368"/>
<path d="M625.800 334 V368"/>
</g>
<!-- straighten line -->
<path d="M161.500 495.900 L504.800 481" stroke="#4a4a4a" stroke-width="0.900"/>
<circle cx="159.500" cy="496" r="2" stroke="#3a3a3a" stroke-width="0.900" fill="#fff"/>
<circle cx="506.800" cy="480.900" r="2" stroke="#3a3a3a" stroke-width="0.900" fill="#fff"/>
<!-- angle label -->
<rect x="518.800" y="456.200" width="27.200" height="14.300" rx="2" fill="#3d3d3d"/>
<text x="534.800" y="465.900" font-family="'Liberation Sans',sans-serif" font-size="7.300" font-weight="bold" fill="#ffffff" text-anchor="middle">2.5°</text>
<!-- red arrow -->
<g transform="translate(264 518.300) rotate(-1.900)"><path d="M0 -4.300 H105 V-9.200 L131.500 -0.300 L105 8.800 V4.300 H0 Z" fill="#f72b4b"/></g>
<!-- red circle -->
<ellipse cx="414.300" cy="47.600" rx="28.100" ry="26.900" stroke="#f72850" stroke-width="8.600"/>
</svg>
<!--OVL-END-->
</body>
</html>
